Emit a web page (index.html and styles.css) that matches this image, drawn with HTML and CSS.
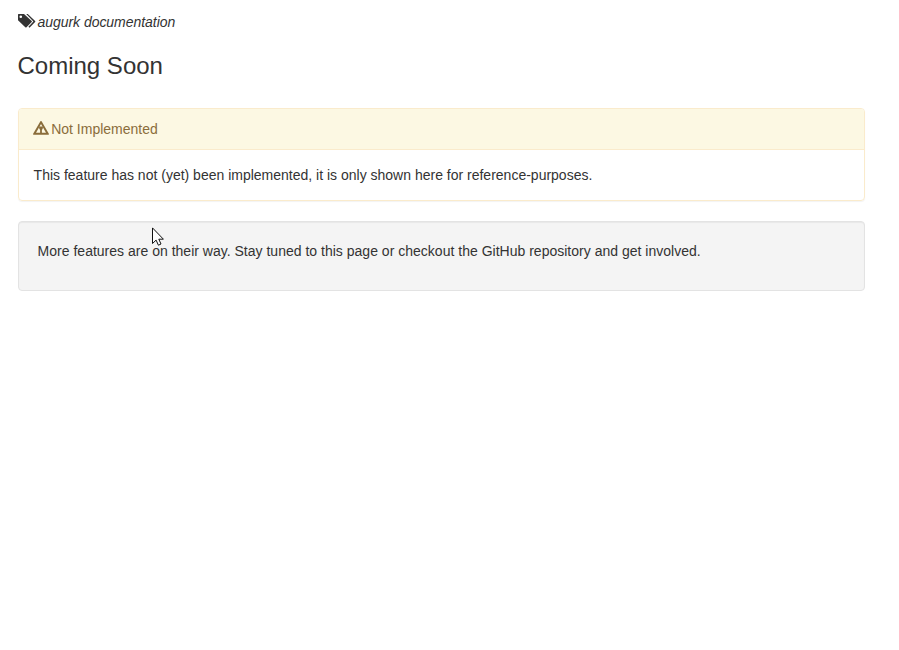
FILE: index.html
```html
<!DOCTYPE html>
<html lang="en">
<head>
<meta charset="utf-8">
<title>Coming Soon</title>
<link rel="stylesheet" href="styles.css">
</head>
<body>
<main class="content">
  <div class="tags">
    <svg class="icon-tags" viewBox="0 0 18 14" width="18" height="14" aria-hidden="true">
      <path fill="currentColor" fill-rule="evenodd" d="M0 .6Q0 0 .6 0H6L13.7 7Q14.2 7.6 13.7 8.1L8.5 13.3Q7.9 13.9 7.3 13.3L0 6.2ZM2.8 1.5A1.3 1.3 0 1 0 2.8 4.1A1.3 1.3 0 1 0 2.8 1.5Z"/>
      <path fill="currentColor" d="M8.2 0H9.8L17.1 7Q17.6 7.6 17.1 8.1L11.5 13.7L10.4 12.7L15.4 7.6Z"/>
    </svg>
    <em class="tag">augurk documentation</em>
  </div>
  <h3 class="title">Coming Soon</h3>
  <section class="panel">
    <div class="panel-heading">
      <svg class="icon-warning" viewBox="0 0 16 14" width="16" height="14" aria-hidden="true">
        <path fill="currentColor" fill-rule="evenodd" d="M7.4 .3Q8 -.3 8.6 .3L16 13.1Q16 13.8 15.4 13.8H.6Q0 13.8 0 13.1ZM8 3.1L3 11.8H13Z"/>
        <path fill="currentColor" d="M6.1 5.6H9.9V7.2L8.9 8.9V12H7.1V8.9L6.1 7.2Z"/>
      </svg>
      <span>Not Implemented</span>
    </div>
    <div class="panel-body">This feature has not (yet) been implemented, it is only shown here for reference-purposes.</div>
  </section>
  <section class="well">
    <p>More features are on their way. Stay tuned to this page or checkout the GitHub repository and get involved.</p>
  </section>
</main>
<svg class="cursor" viewBox="0 0 12 19" width="12" height="19" aria-hidden="true">
  <path fill="#fff" stroke="#111" stroke-width="1" d="M.5 .9V16.5L4.1 13.1L6.4 18.2L9 17L6.8 12.2H11.4Z"/>
</svg>
</body>
</html>
```

FILE: styles.css
```css
* {
  box-sizing: border-box;
}

body {
  margin: 0;
  background: #fff;
  color: #333;
  font: 14px/20px "Liberation Sans", Arial, sans-serif;
}

.content {
  width: 847px;
  margin-left: 18px;
  padding-top: 12px;
}

.tags {
  display: flex;
  height: 20px;
  margin-left: -0.5px;
}

.icon-tags {
  margin: 2px 2px 0 0;
}

.tag {
  letter-spacing: -0.04px;
}

.title {
  margin: 20px 0 29px -0.5px;
  font-size: 24px;
  font-weight: 400;
  line-height: 27px;
}

.panel {
  margin-bottom: 20px;
  border: 1px solid #faebcc;
  border-radius: 4px;
  box-shadow: 0 1px 1px rgba(0, 0, 0, .05);
}

.panel-heading {
  display: flex;
  gap: 2.5px;
  padding: 10px 13.7px;
  border-bottom: 1px solid #faebcc;
  border-radius: 3px 3px 0 0;
  background: #fcf8e3;
  color: #8a6d3b;
}

.icon-warning {
  margin-top: 2px;
}

.panel-body {
  padding: 15px 14.6px;
}

.well {
  padding: 19px 18.6px;
  border: 1px solid #e3e3e3;
  border-radius: 4px;
  background: #f4f4f4;
  box-shadow: inset 0 1px 1px rgba(0, 0, 0, .05);
}

.well p {
  margin: 0 0 10px;
  letter-spacing: 0.01px;
}

.cursor {
  position: absolute;
  left: 152px;
  top: 227px;
}
```
